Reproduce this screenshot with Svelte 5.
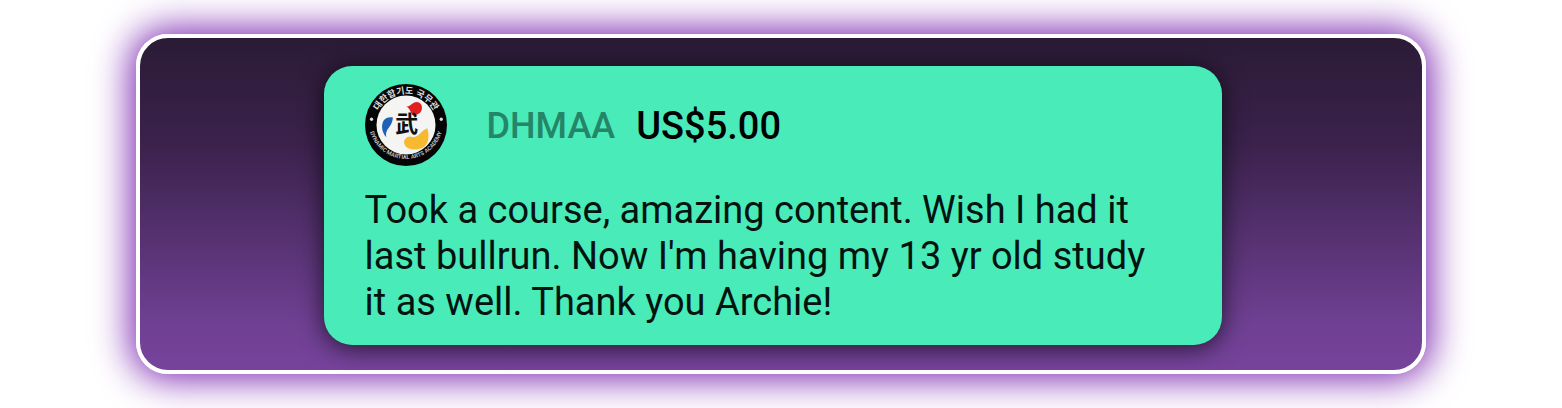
<script lang="ts">
  const comment = {
    author: "DHMAA",
    amount: "US$5.00",
    message:
      "Took a course, amazing content. Wish I had it last bullrun. Now I'm having my 13 yr old study it as well. Thank you Archie!",
  };
</script>

<main class="page">
  <section class="frame">
    <article class="card">
      <header class="head">
        <svg class="avatar" viewBox="0 0 100 100" role="img" aria-label={comment.author}>
          <defs>
            <path id="ring-top" d="M12 50 A38 38 0 0 1 88 50" />
            <path id="ring-bottom" d="M4.5 46 A45.5 45.5 0 0 0 95.5 46" />
          </defs>
          <circle cx="50" cy="50" r="50" fill="#050505" />
          <circle cx="50" cy="50" r="36" fill="#f4f4f2" />
          <text class="ring-korean" text-anchor="middle">
            <textPath href="#ring-top" startOffset="50%">대한합기도 국무관</textPath>
          </text>
          <text class="ring-latin" text-anchor="middle">
            <textPath href="#ring-bottom" startOffset="50%">DYNAMIC MARTIAL ARTS ACADEMY</textPath>
          </text>
          <circle cx="8" cy="43" r="2" fill="#ddd" />
          <circle cx="93" cy="43" r="2" fill="#ddd" />
          <path d="M50 27 C55 29 57 22 63 22 C72 22 72 37 61 38 C55 38 57 31 50 27Z" fill="#e0201f" />
          <path d="M34 41 C20 38 17 55 26 65 C24 54 33 54 34 41Z" fill="#1f62b5" />
          <path d="M76 54 C80 68 76 80 61 80 C45 80 44 65 55 64 C66 67 66 58 76 54Z" fill="#f6b92f" />
          <text class="brush" x="51" y="58" text-anchor="middle">武</text>
        </svg>
        <span class="author">{comment.author}</span>
        <strong class="amount">{comment.amount}</strong>
      </header>
      <p class="message">{comment.message}</p>
    </article>
  </section>
</main>

<style>
  :global(body) {
    background: #fff;
    font-family: Roboto, "Noto Sans CJK KR", sans-serif;
  }

  .page {
    display: flex;
    justify-content: center;
    padding: 34px 136px;
  }

  .frame {
    flex: 1;
    display: flex;
    justify-content: center;
    padding: 28px 16px 25px 0;
    border: 4px solid #fff;
    border-radius: 32px;
    background: linear-gradient(#2b1b36, #3b224c 32%, #6f4093 86%, #76439b);
    box-shadow: 0 0 36px 6px #8030b4;
  }

  .card {
    box-sizing: border-box;
    width: 71%;
    padding: 18px 56px 20px 41px;
    border-radius: 28px;
    background: #49ebb9;
    box-shadow: 0 3px 24px rgba(0, 0, 0, 0.7);
    color: #031410;
  }

  .head {
    display: flex;
    align-items: center;
  }

  .avatar {
    width: 82px;
    height: 82px;
    margin-right: 40px;
  }

  .author {
    margin-right: 21px;
    padding-top: 2px;
    color: #258568;
    font-size: 36px;
    font-weight: 500;
  }

  .amount {
    padding-top: 2px;
    color: #000;
    font-size: 38px;
    font-weight: 500;
  }

  .message {
    margin: 21px 0 0;
    font-size: 38px;
    line-height: 46px;
  }

  .ring-korean {
    fill: #ddd;
    font-size: 11px;
    font-weight: 700;
  }

  .ring-latin {
    fill: #bbb;
    font-size: 7px;
    font-weight: 700;
  }

  .brush {
    fill: #111;
    font-family: "Noto Sans CJK SC", sans-serif;
    font-size: 28px;
    font-weight: 700;
  }
</style>
